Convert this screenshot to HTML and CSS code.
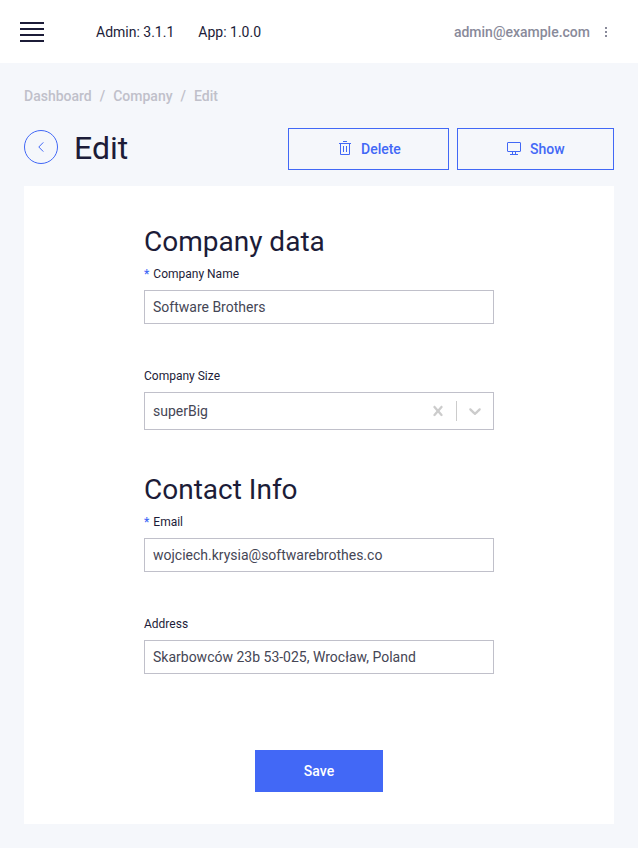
FILE: index.html
```html
<!DOCTYPE html>
<html lang="en">
<head>
<meta charset="utf-8">
<title>Edit Company</title>
<link rel="stylesheet" href="styles.css">
</head>
<body>
<header class="topbar">
  <div class="burger"><span></span><span></span><span></span><span></span></div>
  <div class="versions"><span>Admin: 3.1.1</span><span>App: 1.0.0</span></div>
  <div class="user">
    <span>admin@example.com</span>
    <svg class="dots" width="2" height="10" viewBox="0 0 2 10" fill="currentColor" shape-rendering="crispEdges"><path d="M0 0h2v2H0zM0 4h2v2H0zM0 8h2v2H0z"/></svg>
  </div>
</header>
<main class="page">
  <nav class="breadcrumbs"><span>Dashboard</span><span class="sep">/</span><span>Company</span><span class="sep">/</span><span>Edit</span></nav>
  <div class="title-row">
    <a class="back"><svg width="6" height="10" viewBox="0 0 6 10" fill="none" stroke="currentColor" stroke-width="1"><path d="M5.3.4.8 5l4.5 4.6"/></svg></a>
    <h1>Edit</h1>
    <div class="actions">
      <a class="button delete">
        <svg width="12" height="14" viewBox="0 0 12 14" fill="none" stroke="currentColor" stroke-width="1"><path d="M4 .5h4M0 2.5h12M1.5 2.5v11h9v-11M4.5 5v6M7.5 5v6"/></svg>
        <span>Delete</span>
      </a>
      <a class="button show">
        <svg width="14" height="13" viewBox="0 0 14 13" fill="none" stroke="currentColor" stroke-width="1"><rect x=".5" y=".5" width="13" height="9" rx=".4"/><path d="M5.5 9.5v3M8.5 9.5v3M3 12.5h8"/></svg>
        <span>Show</span>
      </a>
    </div>
  </div>
  <form class="card">
    <section>
      <h2>Company data</h2>
      <div class="field">
        <label for="name"><span class="required">*</span>Company Name</label>
        <input id="name" type="text" value="Software Brothers">
      </div>
      <div class="field">
        <label>Company Size</label>
        <div class="select">
          <span class="value">superBig</span>
          <svg class="clear" width="20" height="20" viewBox="0 0 20 20" fill="currentColor"><path d="M14.348 14.849c-0.469 0.469-1.229 0.469-1.697 0l-2.651-3.030-2.651 3.029c-0.469 0.469-1.229 0.469-1.697 0-0.469-0.469-0.469-1.229 0-1.697l2.758-3.15-2.759-3.152c-0.469-0.469-0.469-1.228 0-1.697s1.228-0.469 1.697 0l2.652 3.031 2.651-3.031c0.469-0.469 1.228-0.469 1.697 0s0.469 1.229 0 1.697l-2.758 3.152 2.758 3.15c0.469 0.469 0.469 1.229 0 1.698z"/></svg>
          <span class="divider"></span>
          <svg class="chevron" width="20" height="20" viewBox="0 0 20 20" fill="currentColor"><path d="M4.516 7.548c0.436-0.446 1.043-0.481 1.576 0l3.908 3.747 3.908-3.747c0.533-0.481 1.141-0.446 1.574 0 0.436 0.445 0.408 1.197 0 1.615-0.406 0.418-4.695 4.502-4.695 4.502-0.217 0.223-0.502 0.335-0.787 0.335s-0.57-0.112-0.789-0.335c0 0-4.287-4.084-4.695-4.502s-0.436-1.17 0-1.615z"/></svg>
        </div>
      </div>
    </section>
    <section>
      <h2>Contact Info</h2>
      <div class="field">
        <label for="email"><span class="required">*</span>Email</label>
        <input id="email" type="text" value="wojciech.krysia@softwarebrothes.co">
      </div>
      <div class="field">
        <label for="address">Address</label>
        <input id="address" type="text" value="Skarbowców 23b 53-025, Wrocław, Poland">
      </div>
    </section>
    <button class="save" type="button">Save</button>
  </form>
</main>
</body>
</html>
```

FILE: styles.css
```css
* { box-sizing: border-box; }

body {
  margin: 0;
  min-height: 848px;
  background: #f5f7fb;
  color: #1c1c38;
  font: 14px/16px Roboto, sans-serif;
}

.topbar {
  display: flex;
  align-items: center;
  height: 63px;
  padding: 0 31px 0 20px;
  background: #fff;
}

.burger { display: grid; gap: 4px; width: 24px; }
.burger span { height: 2px; background: #1c1c38; }
.versions { display: flex; gap: 24px; margin-left: 52px; }
.user { display: flex; align-items: center; gap: 15px; margin-left: auto; color: #898a9a; font-weight: 500; }

.page { padding: 25px 24px 24px; }

.breadcrumbs { display: flex; color: #c0c0ca; font-weight: 500; }
.breadcrumbs .sep { margin: 0 8px; }

.title-row { display: flex; align-items: flex-start; height: 58px; margin-top: 24px; }
.back {
  display: flex;
  align-items: center;
  justify-content: center;
  width: 34px;
  height: 34px;
  margin-top: 2px;
  border: 1px solid #4268f6;
  border-radius: 50%;
  color: #4268f6;
}
h1 { margin: 0 0 0 16px; font-size: 32px; line-height: 40px; font-weight: 400; }

.actions { display: flex; gap: 8px; margin-left: auto; }
.button {
  display: flex;
  align-items: center;
  height: 42px;
  border: 1px solid #4268f6;
  color: #4268f6;
  font-weight: 500;
}
.button.delete { width: 161px; gap: 10px; padding-left: 50px; }
.button.show { width: 157px; gap: 9px; padding-left: 49px; }
.button svg { margin-top: -2px; }
.button.show svg { margin-top: -1px; }

.card {
  display: flex;
  flex-direction: column;
  height: 638px;
  padding: 36px 120px 32px;
  background: #fff;
}
section { height: 248px; }
h2 { margin: 0; font-size: 28px; line-height: 40px; font-weight: 400; }
.field { height: 102px; padding-top: 4px; }
label { display: block; height: 24px; font-size: 12px; line-height: 16px; }
.required { margin-right: 4px; color: #4268f6; font-weight: 500; }

input {
  display: block;
  width: 100%;
  height: 34px;
  padding: 0 8px;
  border: 1px solid #c0c0ca;
  border-radius: 0;
  background: #fff;
  color: #454655;
  font: 14px/16px Roboto, sans-serif;
}

.select {
  display: flex;
  align-items: center;
  height: 38px;
  padding: 0 8px;
  border: 1px solid #c0c0ca;
  color: #454655;
}
.clear { margin-left: auto; color: #ccc; }
.divider { width: 1px; height: 20px; margin: 0 8px; background: #ccc; }
.chevron { color: #ccc; }

.save {
  align-self: center;
  width: 128px;
  height: 42px;
  margin-top: 32px;
  border: 0;
  background: #4268f6;
  color: #fff;
  font: 500 14px/16px Roboto, sans-serif;
}
```
